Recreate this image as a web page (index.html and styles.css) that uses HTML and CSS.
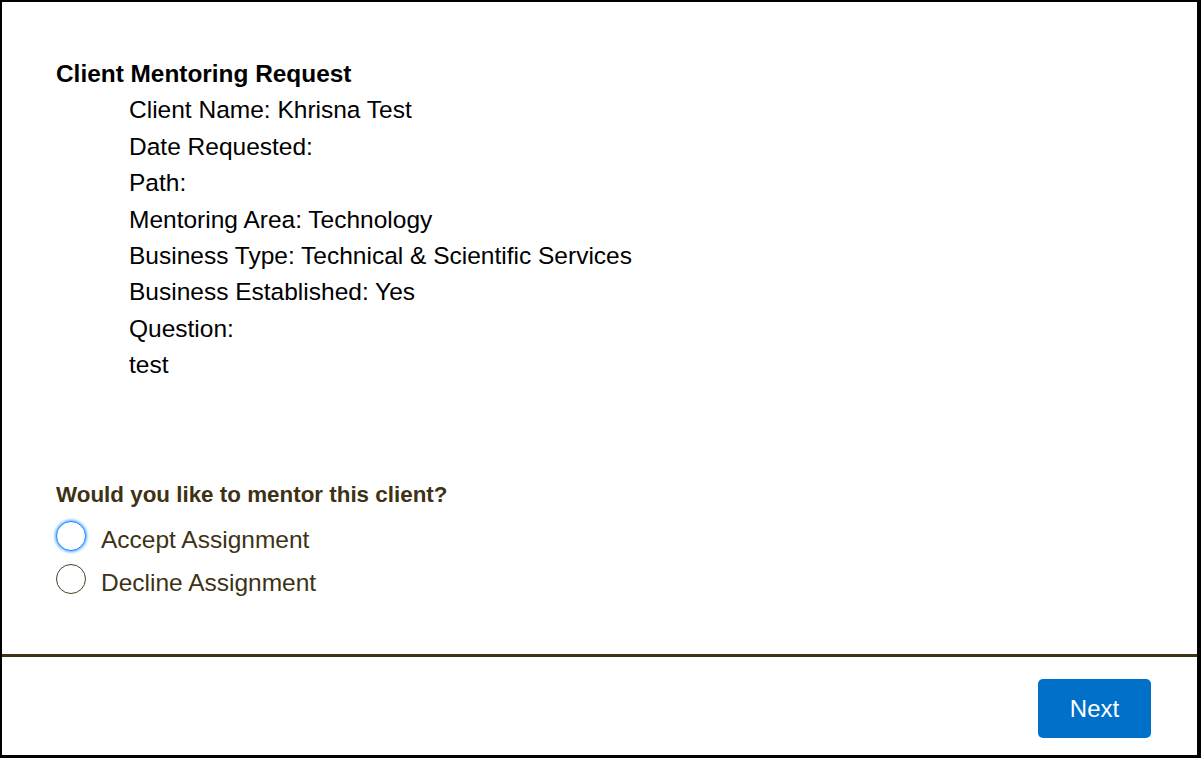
FILE: index.html
```html
<!DOCTYPE html>
<html lang="en">
<head>
<meta charset="utf-8">
<title>Client Mentoring Request</title>
<link rel="stylesheet" href="styles.css">
</head>
<body>
<div class="frame">
  <main class="content">
    <h1 class="title">Client Mentoring Request</h1>
    <div class="details">
      <div>Client Name: Khrisna Test</div>
      <div>Date Requested:</div>
      <div>Path:</div>
      <div>Mentoring Area: Technology</div>
      <div>Business Type: Technical &amp; Scientific Services</div>
      <div>Business Established: Yes</div>
      <div>Question:</div>
      <div>test</div>
    </div>
    <fieldset class="choice">
      <legend class="question">Would you like to mentor this client?</legend>
      <label class="option">
        <input type="radio" name="mentor" value="accept" class="radio-input">
        <span class="radio radio-focus"></span>
        <span class="option-label">Accept Assignment</span>
      </label>
      <label class="option">
        <input type="radio" name="mentor" value="decline" class="radio-input">
        <span class="radio"></span>
        <span class="option-label">Decline Assignment</span>
      </label>
    </fieldset>
  </main>
  <footer class="footer">
    <button class="next-btn" type="button">Next</button>
  </footer>
</div>
</body>
</html>
```

FILE: styles.css
```css
html, body {
  margin: 0;
  padding: 0;
  background: #ffffff;
}

body {
  font-family: "Liberation Sans", Arial, sans-serif;
  color: #000000;
}

.frame {
  width: 1201px;
  height: 758px;
  box-sizing: border-box;
  border-style: solid;
  border-color: #000000;
  border-width: 2px 4px 3px 2px;
  display: flex;
  flex-direction: column;
  background: #ffffff;
}

.content {
  flex: 1;
  padding: 54px 0 0 54px;
}

.title {
  margin: 0;
  font-size: 24.4px;
  line-height: 36.4px;
  font-weight: 700;
  color: #000000;
}

.details {
  margin-left: 73px;
  font-size: 24.5px;
  line-height: 36.4px;
  color: #000000;
}

.choice {
  margin: 96px 0 0 0;
  padding: 0;
  border: 0;
  min-width: 0;
}

.question {
  padding: 0;
  font-size: 22.4px;
  line-height: 30px;
  font-weight: 700;
  color: #3d3215;
  margin-bottom: 8px;
}

.option {
  display: flex;
  align-items: center;
  height: 43px;
  font-size: 24.5px;
  color: #3d3215;
  cursor: pointer;
}

.radio-input {
  position: absolute;
  opacity: 0;
  width: 1px;
  height: 1px;
  margin: 0;
}

.radio {
  width: 28px;
  height: 28px;
  border: 1px solid #4a3f22;
  border-radius: 50%;
  background: #ffffff;
  margin-bottom: 6px;
  flex: none;
}

.radio-focus {
  border-color: #1b8cff;
  box-shadow: 0 0 3px 1px #58a8ff;
}

.option-label {
  margin-left: 15px;
  line-height: 43px;
}

.footer {
  flex: none;
  height: 101px;
  box-sizing: border-box;
  border-top: 3px solid #3d3415;
  display: flex;
  justify-content: flex-end;
  align-items: flex-start;
  padding: 22px 46px 0 0;
}

.next-btn {
  width: 113px;
  height: 59px;
  border: 0;
  border-radius: 5px;
  background: #0070c8;
  color: #ffffff;
  font-family: "Liberation Sans", Arial, sans-serif;
  font-size: 24px;
  padding: 0;
  cursor: pointer;
}
```
